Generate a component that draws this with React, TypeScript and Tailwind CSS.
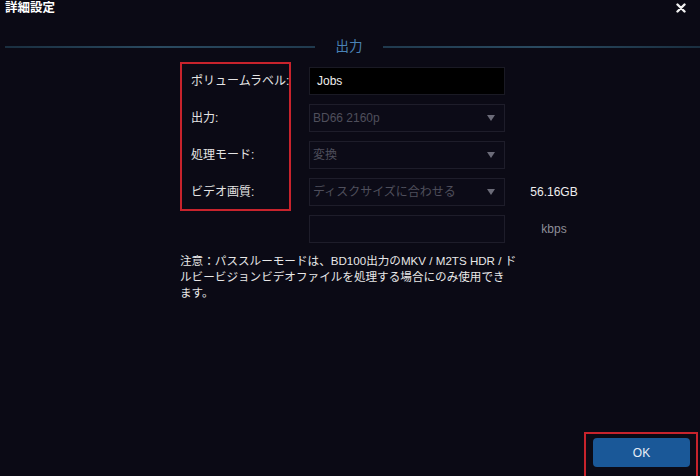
import React from "react";

const Arrow = () => (
  <svg width="8" height="6" viewBox="0 0 8 6" className="shrink-0">
    <path d="M0 0 L8 0 L4 6 Z" fill="#6b6b78" />
  </svg>
);

const Select = ({ value }: { value: string }) => (
  <div className="w-[196px] h-[28px] border border-[#1e1d2a] bg-[#0c0b17] flex items-center justify-between pl-[3px] pr-[9px]">
    <span className="text-[12px] text-[#4f4f5c]">{value}</span>
    <Arrow />
  </div>
);

export default function App() {
  return (
    <div
      className="w-[700px] h-[476px] bg-[#0b0a15] flex flex-col overflow-hidden"
      style={{ fontFamily: '"Liberation Sans", "Noto Sans CJK JP", sans-serif' }}
    >
      {/* title bar */}
      <div className="h-[16px] flex items-center justify-between pl-[5px] pr-[14px]">
        <span className="text-[12.5px] font-bold text-white leading-none">詳細設定</span>
        <svg width="10" height="10" viewBox="0 0 10 10">
          <path d="M1.5 1.5 L8.5 8.5 M8.5 1.5 L1.5 8.5" stroke="#f2f2f2" strokeWidth="2.4" strokeLinecap="round" />
        </svg>
      </div>

      {/* section header */}
      <div className="mt-[23px] h-[16px] flex items-center pl-[5px]">
        <div className="w-[310px] h-[2px] bg-gradient-to-r from-[#1a2f40] via-[#2a4a60] to-[#203a4e]" />
        <span className="w-[68px] text-center text-[13.5px] text-[#4a82b6] leading-none">出力</span>
        <div className="flex-1 h-[2px] bg-gradient-to-r from-[#203a4e] via-[#2a4a60] to-[#1a2f40]" />
      </div>

      {/* form */}
      <div className="relative mt-[12px] flex flex-col gap-[9px] pl-[191px]">
        <div className="absolute left-[180px] top-[-5px] w-[111px] h-[149px] border-2 border-[#c8232c]" />
        <div className="flex items-center h-[28px]">
          <span className="w-[118px] text-[12px] text-[#e4e4e4]">ポリュームラベル:</span>
          <div className="w-[196px] h-[28px] border border-[#1a1a24] bg-black flex items-center pl-[7px]">
            <span className="text-[12px] text-[#eeeeee]">Jobs</span>
          </div>
        </div>
        <div className="flex items-center h-[28px]">
          <span className="w-[118px] text-[12px] text-[#e4e4e4]">出力:</span>
          <Select value="BD66 2160p" />
        </div>
        <div className="flex items-center h-[28px]">
          <span className="w-[118px] text-[12px] text-[#e4e4e4]">処理モード:</span>
          <Select value="変換" />
        </div>
        <div className="flex items-center h-[28px]">
          <span className="w-[118px] text-[12px] text-[#e4e4e4]">ビデオ画質:</span>
          <Select value="ディスクサイズに合わせる" />
          <span className="ml-[5px] w-[88px] text-center text-[12px] text-[#eeeeee]">56.16GB</span>
        </div>
        <div className="flex items-center h-[28px]">
          <span className="w-[118px]" />
          <div className="w-[196px] h-[28px] border border-[#1e1d2a] bg-[#0c0b17]" />
          <span className="ml-[5px] w-[88px] text-center text-[12px] text-[#8e8e98]">kbps</span>
        </div>
      </div>

      {/* note */}
      <div className="mt-[10px] pl-[180px] text-[11.6px] leading-[16px] text-[#e8e8e8]">
        注意：パススルーモードは、BD100出力のMKV / M2TS HDR / ド
        <br />
        ルビービジョンビデオファイルを処理する場合にのみ使用でき
        <br />
        ます。
      </div>

      <div className="flex-1" />

      {/* footer */}
      <div className="flex justify-end pr-[10px] pb-[9px]">
        <div className="relative">
          <div className="absolute left-[-9px] top-[-6px] right-[-8px] bottom-[-14px] border-2 border-[#c8232c]" />
          <button className="w-[97px] h-[29px] rounded-[4px] bg-[#1a5898] text-[12px] text-[#e8eef6]">
            OK
          </button>
        </div>
      </div>
    </div>
  );
}
